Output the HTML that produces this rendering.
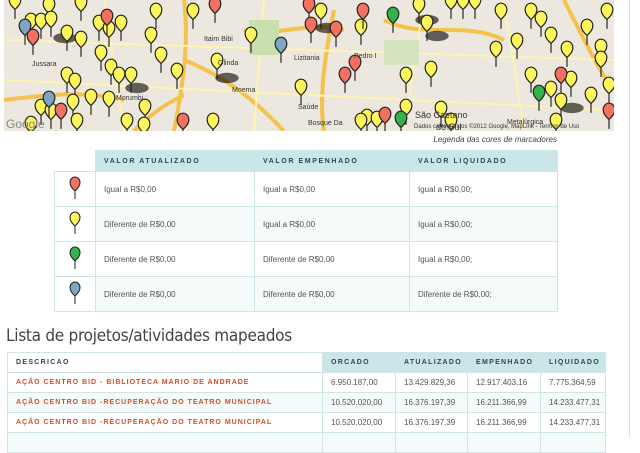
<!DOCTYPE html>
<html><head><meta charset="utf-8"><style>
*{margin:0;padding:0;box-sizing:border-box}
body{width:640px;height:437px;overflow:hidden;background:#fff;font-family:"Liberation Sans",sans-serif;position:relative}
.map{position:absolute;left:4px;top:0;width:610px;height:131px;background:#ece8df;overflow:hidden}
.sb{position:absolute;left:629px;top:0;width:1px;height:437px;background:#ddd}
.leg{position:absolute;right:83px;top:135px;font-size:8px;font-style:italic;color:#444}
table{border-collapse:collapse;position:absolute;table-layout:fixed}
.t1{left:54px;top:150px}
.t1 td,.t1 th{border:1px solid #cfe6e4;font-size:8px;color:#555;text-align:left;padding-left:8px}
.t1 th{background:#c9e6e8;height:21px;font-size:7px;letter-spacing:1.6px;color:#345;font-weight:bold}
.t1 td{height:35px}
.t1 tr.a td{background:#f5fafa}
.t1 td.i{width:41px;padding:0;text-align:center;background:#fff!important}
h2{position:absolute;left:6px;top:326px;font-size:17px;font-weight:normal;color:#444;font-family:"DejaVu Sans","Liberation Sans",sans-serif;letter-spacing:-0.3px;transform:scaleX(.9);transform-origin:left;white-space:nowrap}
.t2{left:7px;top:352px;width:598px}
.t2 td,.t2 th{border:1px solid #cfe6e4;font-size:8px;color:#555;height:20px;white-space:nowrap;overflow:hidden}
.t2 th{background:#c9e6e8;font-size:7px;letter-spacing:1.3px;color:#345;text-align:left;padding-left:8px}
.t2 th.d{background:#fff}
.t2 td{padding-left:8px}
.t2 td.n{color:#d0502a;font-weight:bold;font-size:7px;letter-spacing:1px}
.t2 tr.a td{background:#f5fafa}
</style></head><body>
<div class="map">
<svg width="610" height="131" viewBox="0 0 610 131">
<defs>
<symbol id="p" viewBox="0 0 12 24"><path d="M6,23 L6,15 C3,12 1,10 1,6.5 A5,5.5 0 1 1 11,6.5 C11,10 9,12 6,15 Z" stroke="#222" stroke-width="1"/></symbol>
<symbol id="s" viewBox="0 0 20 12"><ellipse cx="10" cy="6" rx="9" ry="4" fill="#000" opacity=".6"/></symbol>
</defs>
<g stroke="#f5c24a" stroke-width="4" fill="none">
<path d="M180,0 C185,40 180,80 170,131"/>
<path d="M180,60 C230,80 260,110 280,131"/>
<path d="M330,10 C320,60 315,100 320,131"/>
<path d="M240,30 C260,40 300,20 340,30"/>
<path d="M0,100 C40,95 80,90 120,100"/>
<path d="M130,131 C150,110 170,100 180,95"/>
<path d="M380,20 C420,40 460,20 500,40"/>
<path d="M560,0 C580,40 600,80 610,90"/>
</g>
<g stroke="#fff4b0" stroke-width="2" fill="none">
<path d="M0,40 L610,60"/><path d="M0,80 L610,110"/><path d="M100,0 L120,131"/><path d="M420,0 L400,131"/><path d="M500,0 L520,131"/><path d="M260,0 L250,131"/>
</g>
<rect x="245" y="20" width="30" height="35" fill="#c8dfae"/>
<rect x="380" y="40" width="35" height="25" fill="#d4e4bf"/>
<g>
<use href="#s" x="310" y="20" width="26" height="16"/><use href="#s" x="420" y="28" width="26" height="16"/><use href="#s" x="410" y="12" width="26" height="16"/><use href="#s" x="210" y="70" width="26" height="16"/><use href="#s" x="80" y="150" width="26" height="16"/><use href="#s" x="120" y="80" width="26" height="16"/><use href="#s" x="555" y="100" width="26" height="16"/><use href="#s" x="48" y="30" width="26" height="16"/></g>
<g fill="#fdf65a">
<use href="#p" x="4" y="-8" width="14" height="28"/><use href="#p" x="38" y="-4" width="14" height="28"/><use href="#p" x="70" y="-6" width="14" height="28"/><use href="#p" x="20" y="12" width="14" height="28"/><use href="#p" x="30" y="12" width="14" height="28"/><use href="#p" x="40" y="10" width="14" height="28"/><use href="#p" x="56" y="24" width="14" height="28"/><use href="#p" x="70" y="30" width="14" height="28"/><use href="#p" x="88" y="14" width="14" height="28"/><use href="#p" x="98" y="20" width="14" height="28"/><use href="#p" x="110" y="14" width="14" height="28"/><use href="#p" x="140" y="26" width="14" height="28"/><use href="#p" x="145" y="2" width="14" height="28"/><use href="#p" x="90" y="44" width="14" height="28"/><use href="#p" x="100" y="58" width="14" height="28"/><use href="#p" x="108" y="66" width="14" height="28"/><use href="#p" x="120" y="66" width="14" height="28"/><use href="#p" x="150" y="46" width="14" height="28"/><use href="#p" x="166" y="62" width="14" height="28"/><use href="#p" x="56" y="66" width="14" height="28"/><use href="#p" x="64" y="72" width="14" height="28"/><use href="#p" x="80" y="88" width="14" height="28"/><use href="#p" x="98" y="90" width="14" height="28"/><use href="#p" x="134" y="98" width="14" height="28"/><use href="#p" x="30" y="98" width="14" height="28"/><use href="#p" x="20" y="115" width="14" height="28"/><use href="#p" x="62" y="93" width="14" height="28"/><use href="#p" x="40" y="102" width="14" height="28"/><use href="#p" x="66" y="112" width="14" height="28"/><use href="#p" x="116" y="112" width="14" height="28"/><use href="#p" x="133" y="116" width="14" height="28"/><use href="#p" x="182" y="2" width="14" height="28"/><use href="#p" x="206" y="52" width="14" height="28"/><use href="#p" x="290" y="78" width="14" height="28"/><use href="#p" x="350" y="18" width="14" height="28"/><use href="#p" x="202" y="112" width="14" height="28"/><use href="#p" x="395" y="66" width="14" height="28"/><use href="#p" x="395" y="98" width="14" height="28"/><use href="#p" x="356" y="108" width="14" height="28"/><use href="#p" x="440" y="112" width="14" height="28"/><use href="#p" x="408" y="-4" width="14" height="28"/><use href="#p" x="416" y="14" width="14" height="28"/><use href="#p" x="440" y="-8" width="14" height="28"/><use href="#p" x="452" y="-8" width="14" height="28"/><use href="#p" x="464" y="-8" width="14" height="28"/><use href="#p" x="490" y="2" width="14" height="28"/><use href="#p" x="506" y="32" width="14" height="28"/><use href="#p" x="520" y="2" width="14" height="28"/><use href="#p" x="530" y="10" width="14" height="28"/><use href="#p" x="540" y="26" width="14" height="28"/><use href="#p" x="556" y="40" width="14" height="28"/><use href="#p" x="576" y="18" width="14" height="28"/><use href="#p" x="590" y="38" width="14" height="28"/><use href="#p" x="520" y="66" width="14" height="28"/><use href="#p" x="560" y="70" width="14" height="28"/><use href="#p" x="550" y="92" width="14" height="28"/><use href="#p" x="580" y="86" width="14" height="28"/><use href="#p" x="598" y="76" width="14" height="28"/><use href="#p" x="540" y="80" width="14" height="28"/><use href="#p" x="596" y="2" width="14" height="28"/><use href="#p" x="545" y="112" width="14" height="28"/><use href="#p" x="310" y="2" width="14" height="28"/><use href="#p" x="350" y="112" width="14" height="28"/><use href="#p" x="366" y="110" width="14" height="28"/><use href="#p" x="430" y="100" width="14" height="28"/><use href="#p" x="485" y="40" width="14" height="28"/><use href="#p" x="240" y="26" width="14" height="28"/><use href="#p" x="420" y="60" width="14" height="28"/><use href="#p" x="590" y="50" width="14" height="28"/></g>
<g fill="#f47060">
<use href="#p" x="22" y="28" width="14" height="28"/><use href="#p" x="96" y="8" width="14" height="28"/><use href="#p" x="204" y="-4" width="14" height="28"/><use href="#p" x="298" y="-4" width="14" height="28"/><use href="#p" x="300" y="16" width="14" height="28"/><use href="#p" x="325" y="20" width="14" height="28"/><use href="#p" x="352" y="2" width="14" height="28"/><use href="#p" x="344" y="54" width="14" height="28"/><use href="#p" x="334" y="66" width="14" height="28"/><use href="#p" x="374" y="106" width="14" height="28"/><use href="#p" x="50" y="102" width="14" height="28"/><use href="#p" x="172" y="112" width="14" height="28"/><use href="#p" x="598" y="102" width="14" height="28"/><use href="#p" x="550" y="66" width="14" height="28"/></g>
<g fill="#34b24a"><use href="#p" x="382" y="6" width="14" height="28"/><use href="#p" x="528" y="84" width="14" height="28"/><use href="#p" x="390" y="110" width="14" height="28"/></g>
<g fill="#7fa5c2"><use href="#p" x="14" y="18" width="14" height="28"/><use href="#p" x="270" y="36" width="14" height="28"/><use href="#p" x="38" y="90" width="14" height="28"/></g>
<g font-family="Liberation Sans" fill="#333" font-size="7">
<text x="200" y="41">Itaim Bibi</text><text x="214" y="65">Olinda</text><text x="228" y="92">Moema</text><text x="290" y="60">Lizitania</text><text x="294" y="109">Saúde</text><text x="304" y="125">Bosque Da</text><text x="350" y="58">Pedro I</text>
<text x="411" y="118" font-size="9">São Caetano</text><text x="432" y="130" font-size="9">do Sul</text><text x="503" y="124">Metalúrgica</text><text x="28" y="66">Jussara</text><text x="112" y="100">Morumbi</text>
<text x="410" y="128" font-size="6">Dados cartográficos ©2012 Google, MapLink - Termos de Uso</text>
<text x="2" y="128" font-size="12" fill="#888">Google</text></g>
</svg></div>
<div class="sb"></div>
<div class="leg">Legenda das cores de marcadores</div>
<table class="t1">
<tr><th style="background:#fff;border:none;width:41px"></th><th style="width:159px">VALOR ATUALIZADO</th><th style="width:155px">VALOR EMPENHADO</th><th style="width:148px">VALOR LIQUIDADO</th></tr>
<tr><td class="i"><svg width="12" height="26"><use href="#p" width="12" height="26" fill="#f47060"/></svg></td><td>Igual a R$0,00</td><td>Igual a R$0,00</td><td>Igual a R$0,00;</td></tr>
<tr class="a"><td class="i"><svg width="12" height="26"><use href="#p" width="12" height="26" fill="#fdf65a"/></svg></td><td>Diferente de R$0,00</td><td>Igual a R$0,00</td><td>Igual a R$0,00;</td></tr>
<tr><td class="i"><svg width="12" height="26"><use href="#p" width="12" height="26" fill="#34b24a"/></svg></td><td>Diferente de R$0,00</td><td>Diferente de R$0,00</td><td>Igual a R$0,00;</td></tr>
<tr class="a"><td class="i"><svg width="12" height="26"><use href="#p" width="12" height="26" fill="#7fa5c2"/></svg></td><td>Diferente de R$0,00</td><td>Diferente de R$0,00</td><td>Diferente de R$0,00;</td></tr>
</table>
<h2>Lista de projetos/atividades mapeados</h2>
<table class="t2">
<tr><th class="d" style="width:315px">DESCRICAO</th><th style="width:73px">ORCADO</th><th style="width:72px">ATUALIZADO</th><th style="width:73px">EMPENHADO</th><th style="width:65px">LIQUIDADO</th></tr>
<tr><td class="n">AÇÃO CENTRO BID - BIBLIOTECA MARIO DE ANDRADE</td><td>6.950.187,00</td><td>13.429.829,36</td><td>12.917.403,16</td><td>7.775.364,59</td></tr>
<tr class="a"><td class="n">AÇÃO CENTRO BID -RECUPERAÇÃO DO TEATRO MUNICIPAL</td><td>10.520.020,00</td><td>16.376.197,39</td><td>16.211.366,99</td><td>14.233.477,31</td></tr>
<tr><td class="n">AÇÃO CENTRO BID -RECUPERAÇÃO DO TEATRO MUNICIPAL</td><td>10.520.020,00</td><td>16.376.197,39</td><td>16.211.366,99</td><td>14.233.477,31</td></tr>
<tr class="a"><td class="n"></td><td></td><td></td><td></td><td></td></tr>
</table>
</body></html>
